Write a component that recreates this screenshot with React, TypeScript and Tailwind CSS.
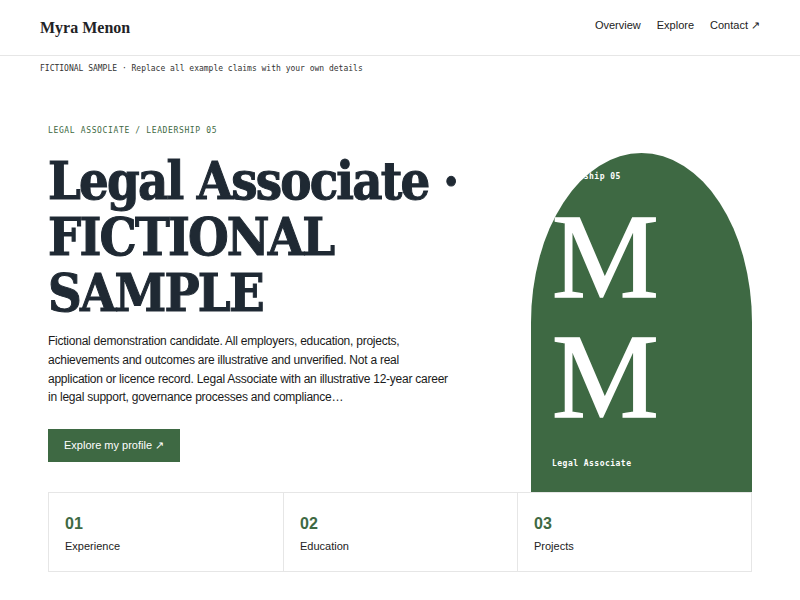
import React from "react";

const serif = "font-['Liberation_Serif','Times_New_Roman',serif]";
const display = "font-['DejaVu_Serif','Liberation_Serif',serif] [font-stretch:condensed]";
const sans = "font-['Liberation_Sans',Arial,sans-serif]";
const mono = "font-['DejaVu_Sans_Mono','Liberation_Mono',monospace]";

const stats = [
  { n: "01", label: "Experience" },
  { n: "02", label: "Education" },
  { n: "03", label: "Projects" },
];

export default function App() {
  return (
    <div className={`min-h-[600px] w-[800px] bg-white text-[#1f2933] ${sans}`}>
      <header className="flex h-[56px] items-center justify-between border-b border-[#e6e6e6] px-10">
        <div className={`${serif} text-[16px] font-bold text-[#1f2326]`}>Myra Menon</div>
        <nav className="-mt-[4px] flex items-center gap-4 text-[11px] text-[#222]">
          <a>Overview</a>
          <a>Explore</a>
          <a>Contact ↗</a>
        </nav>
      </header>

      <div className={`${mono} px-10 pt-[7px] text-[8px] text-[#333]`}>
        FICTIONAL SAMPLE · Replace all example claims with your own details
      </div>

      <main className="px-12 pt-[50px]">
        <div className="flex items-end justify-between">
          <div className="pb-[30px]">
            <div className={`${mono} text-[8px] tracking-[0.08em] text-[#3e6943]`}>
              LEGAL ASSOCIATE / LEADERSHIP 05
            </div>
            <h1
              className={`${display} mt-[16px] text-[52px] font-bold leading-[1.08] tracking-[-0.035em] text-[#1f2933] [-webkit-text-stroke:1px_#1f2933]`}
            >
              Legal Associate ·<br />
              FICTIONAL<br />
              SAMPLE
            </h1>
            <p className="mt-[11px] max-w-[400px] text-[12px] leading-[1.55] tracking-[-0.02em] text-[#1a1a1a]">
              Fictional demonstration candidate. All employers, education, projects, achievements and outcomes are
              illustrative and unverified. Not a real application or licence record. Legal Associate with an
              illustrative 12-year career in legal support, governance processes and compliance…
            </p>
            <button className="mt-[22px] h-[33px] bg-[#3e6943] px-4 text-[11px] text-white">
              Explore my profile ↗
            </button>
          </div>

          <div className="flex h-[339px] w-[221px] flex-col justify-between overflow-hidden rounded-t-[50%] bg-[#3e6943] px-[21px] pt-[18px] pb-[22px] text-white">
            <div className={`${mono} text-[8px] font-bold tracking-[0.06em]`}>Leadership 05</div>
            <div className={`${serif} -mt-[6px] text-[120px] leading-[1] [-webkit-text-stroke:1.5px_white]`}>
              <div>M</div>
              <div>M</div>
            </div>
            <div className={`${mono} text-[8px] font-bold tracking-[0.06em]`}>Legal Associate</div>
          </div>
        </div>

        <div className="grid grid-cols-3 border border-[#e6e6e6]">
          {stats.map((s, i) => (
            <div key={s.n} className={`h-[78px] px-4 pt-[19px] ${i > 0 ? "border-l border-[#e6e6e6]" : ""}`}>
              <div className="text-[16px] font-bold text-[#3e6943]">{s.n}</div>
              <div className="mt-[2px] text-[11px] text-[#222]">{s.label}</div>
            </div>
          ))}
        </div>
      </main>
    </div>
  );
}
